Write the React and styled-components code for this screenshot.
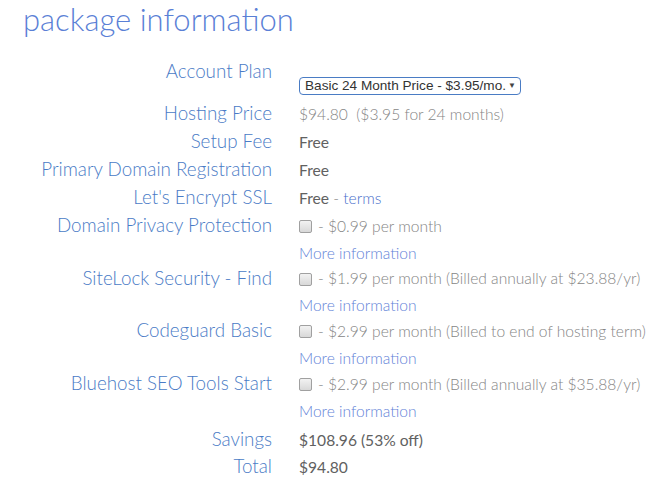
import React from "react";
import styled, { createGlobalStyle } from "styled-components";

const Global = createGlobalStyle`
  html, body { margin: 0; padding: 0; background: #ffffff; }
  body { font-family: Lato, "Open Sans", sans-serif; }
`;

const Page = styled.div`
  width: 669px;
  height: 489px;
  overflow: hidden;
  box-sizing: border-box;
  padding: 0 0 0 23px;
`;

const Title = styled.h1`
  margin: 0 0 19px 0;
  font-family: Lato, sans-serif;
  font-weight: 300;
  font-size: 31px;
  line-height: 38px;
  color: #5a80d6;
`;

const Table = styled.div`
  display: grid;
  grid-template-columns: 249px auto;
  column-gap: 27px;
  align-items: baseline;
`;

const Label = styled.div`
  text-align: right;
  white-space: nowrap;
  font-family: Lato, sans-serif;
  font-weight: 300;
  font-size: 18.8px;
  line-height: 20px;
  color: #4a7bc6;
  padding: ${(p) => p.$pt ?? 4}px 0 4px 0;
  align-self: ${(p) => (p.$top ? "start" : "baseline")};
`;

const Value = styled.div`
  font-family: Lato, sans-serif;
  font-size: 15.6px;
  line-height: 20px;
  padding: ${(p) => p.$pt ?? 4}px 0 2.7px 0;
  white-space: nowrap;
`;

const SelectCell = styled.div`
  padding: 20px 0 4px 0;
  align-self: start;
`;

const Text = styled.span`
  color: ${(p) => (p.$light ? "#858585" : "#616161")};
  font-weight: ${(p) => (p.$light ? 300 : 400)};
  white-space: pre;
`;

const Link = styled.a`
  color: #4a6fcb;
  font-weight: 300;
  text-decoration: none;
`;

const MoreLink = styled.a`
  display: block;
  margin: 7px 0 -1.5px 0;
  color: #6383d8;
  font-weight: 300;
  text-decoration: none;
`;

const Line = styled.div`
  display: flex;
  align-items: center;
  gap: 6px;
`;

const Box = styled.span`
  display: inline-block;
  width: 11px;
  height: 11px;
  border: 1px solid #a0a0a0;
  border-radius: 2px;
  background: linear-gradient(#f2f2f2, #d8d8d8);
  flex: none;
  position: relative;
  top: 1px;
`;

const PlanSelect = styled.div`
  display: flex;
  align-items: center;
  justify-content: space-between;
  box-sizing: border-box;
  width: 222px;
  height: 18px;
  padding: 0 4px 0 5px;
  border: 1px solid #4a7cc4;
  border-radius: 4px;
  font-family: "Liberation Sans", Arial, sans-serif;
  font-size: 13.6px;
  line-height: 16px;
  color: #333;
  background: #fff;
  white-space: nowrap;
  overflow: hidden;
`;

const Caret = styled.span`
  font-size: 8px;
  color: #444;
  margin-left: 2px;
  flex: none;
`;

const addons = [
  { label: "Domain Privacy Protection", text: "- $0.99 per month" },
  { label: "SiteLock Security - Find", text: "- $1.99 per month (Billed annually at $23.88/yr)" },
  { label: "Codeguard Basic", text: "- $2.99 per month (Billed to end of hosting term)" },
  { label: "Bluehost SEO Tools Start", text: "- $2.99 per month (Billed annually at $35.88/yr)" },
];

export default function App() {
  return (
    <Page>
      <Global />
      <Title>package information</Title>
      <Table>
        <Label $top>Account Plan</Label>
        <SelectCell>
          <PlanSelect>
            <span>Basic 24 Month Price - $3.95/mo.</span>
            <Caret>▼</Caret>
          </PlanSelect>
        </SelectCell>

        <Label>Hosting Price</Label>
        <Value>
          <Text $light>{"$94.80  ($3.95 for 24 months)"}</Text>
        </Value>

        <Label>Setup Fee</Label>
        <Value>
          <Text>Free</Text>
        </Value>

        <Label>Primary Domain Registration</Label>
        <Value>
          <Text>Free</Text>
        </Value>

        <Label>Let's Encrypt SSL</Label>
        <Value>
          <Text>Free</Text>
          <Text $light>{" - "}</Text>
          <Link href="#">terms</Link>
        </Value>

        {addons.map((a) => (
          <React.Fragment key={a.label}>
            <Label>{a.label}</Label>
            <Value>
              <Line>
                <Box />
                <Text $light>{a.text}</Text>
              </Line>
              <MoreLink href="#">More information</MoreLink>
            </Value>
          </React.Fragment>
        ))}

        <Label $pt={7.5}>Savings</Label>
        <Value $pt={7.5}>
          <Text>$108.96 (53% off)</Text>
        </Value>

        <Label $pt={3}>Total</Label>
        <Value $pt={3}>
          <Text>$94.80</Text>
        </Value>
      </Table>
    </Page>
  );
}
